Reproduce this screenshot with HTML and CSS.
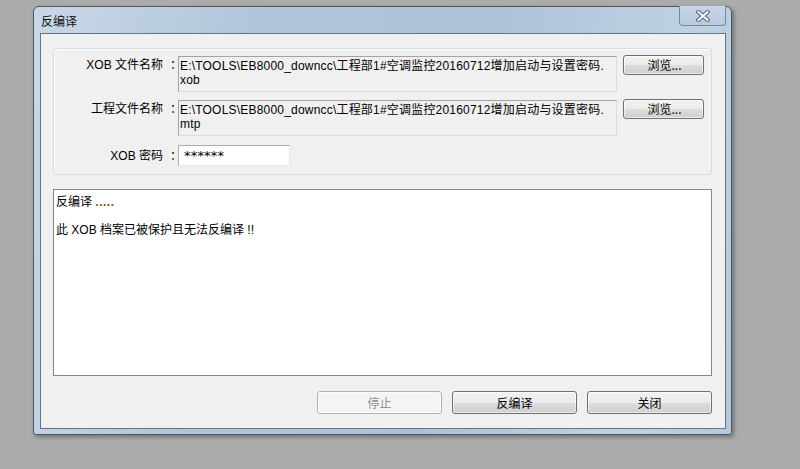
FILE: index.html
```html
<!DOCTYPE html>
<html lang="zh-CN">
<head>
<meta charset="utf-8">
<title>反编译</title>
<link rel="stylesheet" href="styles.css">
</head>
<body>
<div class="window">
  <div class="titlebar">
    <span class="title">反编译</span>
    <div class="close">
      <svg width="14" height="12" viewBox="0 0 14 12">
        <path d="M2.5 2 L11.5 10 M11.5 2 L2.5 10" stroke="#5b6068" stroke-width="4.2" stroke-linecap="square"/>
        <path d="M2.5 2 L11.5 10 M11.5 2 L2.5 10" stroke="#ffffff" stroke-width="2" stroke-linecap="square"/>
      </svg>
    </div>
  </div>
  <div class="client">
    <div class="group">
      <div class="label">XOB 文件名称<span class="colon">：</span></div>
      <div class="field">E:\TOOLS\EB8000_downcc\工程部1#空调监控20160712增加启动与设置密码.<br>xob</div>
      <button class="btn browse">浏览...</button>

      <div class="label">工程文件名称<span class="colon">：</span></div>
      <div class="field">E:\TOOLS\EB8000_downcc\工程部1#空调监控20160712增加启动与设置密码.<br>mtp</div>
      <button class="btn browse">浏览...</button>

      <div class="label mid">XOB 密码<span class="colon">：</span></div>
      <div class="pwd-cell"><div class="pwd">******</div></div>
      <div></div>
    </div>
    <div class="log">反编译 <span class="dots">.....</span><br><br>此 XOB 档案已被保护且无法反编译 !!</div>
    <div class="actions">
      <button class="btn wide disabled">停止</button>
      <button class="btn wide">反编译</button>
      <button class="btn wide">关闭</button>
    </div>
  </div>
</div>
</body>
</html>
```
FILE: styles.css
```css
* { box-sizing: border-box; }
html, body { margin: 0; padding: 0; }
body {
  background: #ababab;
  width: 800px;
  height: 469px;
  overflow: hidden;
  font-family: "Liberation Sans", "Noto Sans CJK SC", sans-serif;
  font-size: 12px;
  color: #000;
}
.window {
  margin: 6px 0 0 33px;
  width: 699px;
  height: 429px;
  border: 1px solid #4f5864;
  border-radius: 6px 6px 3px 3px;
  background: linear-gradient(100deg, #c9d8e8 0%, #b0c4da 30%, #adc1d8 60%, #bfd1e4 85%, #b5c9de 100%);
  padding: 0 5px 5px 6px;
  box-shadow: 2px 2px 4px rgba(0,0,0,0.35);
  display: flex;
  flex-direction: column;
}
.titlebar {
  height: 27px;
  display: flex;
  align-items: center;
  position: relative;
}
.title {
  font-family: "Noto Sans CJK SC", sans-serif;
  font-size: 12px;
  line-height: 14px;
  padding: 2px 0 0 1px;
  color: #111;
}
.close {
  position: absolute;
  right: 0;
  top: -1px;
  width: 47px;
  height: 20px;
  border: 1px solid #7c8794;
  border-top: none;
  border-radius: 0 0 4px 4px;
  background: linear-gradient(#c5d6e8, #b8cbe0);
  display: flex;
  align-items: center;
  justify-content: center;
}
.client {
  flex: 1;
  background: #f0f0f0;
  border: 1px solid #69737f;
  padding: 14px 13px 14px 12px;
  display: flex;
  flex-direction: column;
}
.group {
  height: 127px;
  border: 1px solid #d5dbe2;
  border-radius: 3px;
  box-shadow: inset 1px 1px 0 #fff;
  display: grid;
  grid-template-columns: 121px 439px 81px;
  grid-template-rows: 36px 36px 21px;
  column-gap: 3px;
  row-gap: 8px;
  padding: 7px 0 0 0;
}
.group .btn.browse { margin-left: 3px; }
.label {
  text-align: right;
  line-height: 14px;
  padding-top: 2px;
  white-space: nowrap;
}
.colon {
  margin-left: 7px;
  letter-spacing: -7px;
}
.label.mid {
  align-self: center;
  padding-top: 2px;
}
.field {
  border: 1px solid #a3a3a3;
  border-right-color: #dcdcdc;
  border-bottom-color: #dcdcdc;
  background: #f0f0f0;
  padding: 2px 0 0 1px;
  line-height: 14px;
  letter-spacing: 0.2px;
  white-space: nowrap;
  overflow: hidden;
}
.pwd-cell { margin-top: 1px; }
.pwd {
  width: 112px;
  height: 21px;
  background: #fff;
  border: 1px solid #abadb3;
  border-right-color: #e3e9ef;
  border-bottom-color: #e3e9ef;
  padding: 4px 0 0 5px;
  line-height: 12px;
  font-family: "DejaVu Sans", sans-serif;
  font-size: 13px;
  letter-spacing: 0.2px;
}
.btn {
  font-family: "Noto Sans CJK SC", sans-serif;
  font-size: 12px;
  color: #000;
  border: 1px solid #707070;
  border-radius: 3px;
  background: linear-gradient(#f2f2f2 0%, #ebebeb 50%, #dddddd 51%, #cfcfcf 100%);
  box-shadow: inset 0 0 0 1px rgba(255,255,255,0.6);
  padding: 0;
  line-height: 14px;
}
.browse {
  width: 81px;
  height: 20px;
  margin-top: -1px;
  padding-left: 2px;
}
.log {
  margin-top: 14px;
  height: 187px;
  background: #fff;
  border: 1px solid #828790;
  padding: 5px 0 0 2px;
  line-height: 14px;
  white-space: nowrap;
}
.dots {
  color: #8a5200;
  font-weight: bold;
  letter-spacing: 0.5px;
}
.actions {
  margin-top: 15px;
  display: flex;
  justify-content: flex-end;
  gap: 10px;
}
.btn.wide {
  width: 125px;
  height: 23px;
}
.btn.disabled {
  color: #8d8d8d;
  border-color: #adb2b5;
  background: #f4f4f4;
}
```
